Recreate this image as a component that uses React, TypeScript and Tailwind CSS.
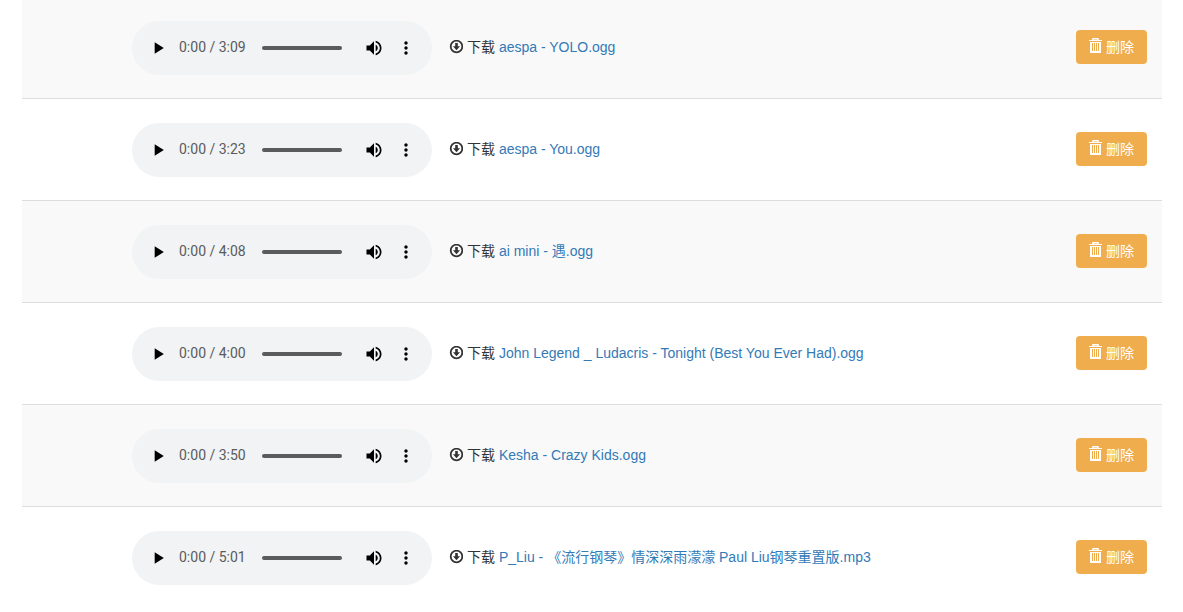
const songs = [
  { name: 'aespa - YOLO.ogg', duration: '3:09' },
  { name: 'aespa - You.ogg', duration: '3:23' },
  { name: 'ai mini - 遇.ogg', duration: '4:08' },
  { name: 'John Legend _ Ludacris - Tonight (Best You Ever Had).ogg', duration: '4:00' },
  { name: 'Kesha - Crazy Kids.ogg', duration: '3:50' },
  { name: 'P_Liu - 《流行钢琴》情深深雨濛濛 Paul Liu钢琴重置版.mp3', duration: '5:01' },
];

const DownloadIcon = () => (
  <svg viewBox="0 0 14 14" className="size-3.5 shrink-0" aria-hidden="true">
    <circle cx="7.5" cy="6.5" r="5.8" fill="none" stroke="currentColor" strokeWidth="1.8" />
    <path d="M6.2 3h2.6v3.2h2.2L7.5 10.3 4 6.2h2.2z" fill="currentColor" />
  </svg>
);

const TrashIcon = () => (
  <svg viewBox="0 0 13 18" className="h-[18px] w-[13px] shrink-0" fill="none" stroke="currentColor" aria-hidden="true">
    <path d="M4 2V.75h5V2" strokeWidth="1.5" />
    <path d="M0 2.5h13M1.5 4.5h10" />
    <path d="M2 4v10h9V4" strokeWidth="2" />
    <path d="M4.5 5v9M6.5 5v9M8.5 5v9" />
  </svg>
);

const Player = ({ name, duration }: { name: string; duration: string }) => (
  <div className="flex h-[54px] w-[300px] items-center rounded-full bg-[#f1f3f4] px-2.5">
    <button type="button" aria-label="播放" className="flex size-8 items-center justify-center">
      <svg viewBox="0 0 24 24" className="size-5">
        <path d="M8 5v14l11-7z" />
      </svg>
    </button>
    <span className="ml-[5px] pb-0.5 font-['Roboto',sans-serif] text-sm text-[#5a5b5c]">0:00 / {duration}</span>
    <input
      type="range"
      min="0"
      max="100"
      defaultValue="0"
      aria-label={name}
      className="mx-4 h-1 min-w-0 flex-1 appearance-none rounded-full bg-[#5a5b5c] [&::-webkit-slider-thumb]:appearance-none"
    />
    <button type="button" aria-label="静音" className="flex size-8 items-center justify-center">
      <svg viewBox="0 0 24 24" className="size-5">
        <path d="M3 9v6h4l5 5V4L7 9H3zm13.5 3c0-1.77-1.02-3.29-2.5-4.03v8.05c1.48-.73 2.5-2.25 2.5-4.02zM14 3.23v2.06c2.89.86 5 3.54 5 6.71s-2.11 5.85-5 6.71v2.06c4.01-.91 7-4.49 7-8.77s-2.99-7.86-7-8.77z" />
      </svg>
    </button>
    <button type="button" aria-label="更多" className="flex size-8 items-center justify-center">
      <svg viewBox="0 0 24 24" className="size-5">
        <path d="M12 8c1.1 0 2-.9 2-2s-.9-2-2-2-2 .9-2 2 .9 2 2 2zm0 2c-1.1 0-2 .9-2 2s.9 2 2 2 2-.9 2-2-.9-2-2-2zm0 6c-1.1 0-2 .9-2 2s.9 2 2 2 2-.9 2-2-.9-2-2-2z" />
      </svg>
    </button>
  </div>
);

export default function App() {
  return (
    <main className="overflow-hidden bg-white pr-[21px] pl-[22px] font-['Liberation_Sans','Noto_Sans_CJK_SC',sans-serif] text-sm leading-5 text-[#333]">
      <table className="-mt-1 w-full border-separate border-spacing-0">
        <tbody>
          {songs.map((song) => (
            <tr key={song.name} className="odd:bg-[#f9f9f9]">
              <td className="w-[418px] border-t border-[#ddd] pt-6 pr-2 pb-[23px] pl-[110px]">
                <Player name={song.name} duration={song.duration} />
              </td>
              <td className="border-t border-[#ddd] px-[9px] pt-10 align-top">
                <div className="flex items-center gap-1">
                  <DownloadIcon />
                  <span>
                    下载{' '}
                    <a href="#" className="text-[#337ab7]">
                      {song.name}
                    </a>
                  </span>
                </div>
              </td>
              <td className="w-24 border-t border-[#ddd] pt-[33px] pr-[15px] align-top">
                <button
                  type="button"
                  className="ml-auto flex h-[34px] items-center gap-1 rounded-sm bg-[#f0ad4e] px-[13px] text-white"
                >
                  <TrashIcon />
                  删除
                </button>
              </td>
            </tr>
          ))}
        </tbody>
      </table>
    </main>
  );
}
